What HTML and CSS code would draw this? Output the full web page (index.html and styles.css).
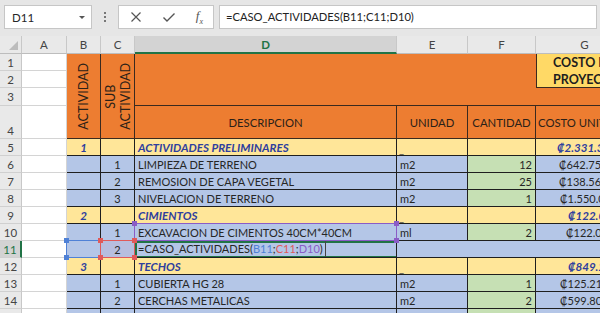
FILE: index.html
```html
<!DOCTYPE html>
<html lang="es">
<head>
<meta charset="utf-8">
<title>Hoja</title>
<link rel="stylesheet" href="styles.css">
</head>
<body>
<div class="toolbar">
  <div class="namebox"><span class="nb-text">D11</span><span class="caret"></span></div>
  <div class="grip"><i></i><i></i><i></i></div>
  <div class="fxbox">
    <svg class="ico" width="14" height="14" viewBox="0 0 14 14"><path d="M2.5 2.5 L11.5 11.5 M11.5 2.5 L2.5 11.5" stroke="#555" stroke-width="1.2" fill="none"/></svg>
    <svg class="ico" width="16" height="14" viewBox="0 0 16 14"><path d="M2.5 7.5 L6 11 L13.5 3.5" stroke="#555" stroke-width="1.4" fill="none"/></svg>
    <span class="fx">f<sub>x</sub></span>
  </div>
  <div class="formula">=CASO_ACTIVIDADES(B11;C11;D10)</div>
</div>

<div class="sheet">
  <!-- column headers -->
  <div class="ch corner"><span class="tri"></span></div>
  <div class="ch">A</div>
  <div class="ch">B</div>
  <div class="ch">C</div>
  <div class="ch ch-sel">D</div>
  <div class="ch">E</div>
  <div class="ch">F</div>
  <div class="ch">G</div>

  <!-- merged header blocks -->
  <div class="or m-b vcell"><span class="rot">ACTIVIDAD</span></div>
  <div class="or m-c vcell"><span class="rot">SUB<br>ACTIVIDAD</span></div>
  <div class="or m-df"></div>
  <div class="m-g title">COSTO DIRECTO DEL<br>PROYECTO</div>

  <div class="rh">1</div><div class="ca"></div>
  <div class="rh">2</div><div class="ca"></div>
  <div class="rh">3</div><div class="ca"></div><div class="or g3"></div>
  <div class="rh rh-b">4</div><div class="ca"></div>
  <div class="or hd">DESCRIPCION</div>
  <div class="or hd">UNIDAD</div>
  <div class="or hd">CANTIDAD</div>
  <div class="or hd hd-l">COSTO UNITARIO</div>

  <!-- row 5 -->
  <div class="rh">5</div><div class="ca"></div>
  <div class="yl c num bi">1</div>
  <div class="yl c"></div>
  <div class="yl c txt bi">ACTIVIDADES PRELIMINARES</div>
  <div class="yl c und">_</div>
  <div class="yl c"></div>
  <div class="yl c money bi p-a">₡2.331.310,00</div>

  <!-- row 6 -->
  <div class="rh">6</div><div class="ca"></div>
  <div class="bl c"></div>
  <div class="bl c num">1</div>
  <div class="bl c txt">LIMPIEZA DE TERRENO</div>
  <div class="bl c txt">m2</div>
  <div class="gr c qty">12</div>
  <div class="bl c money p-b">₡642.750,00</div>

  <!-- row 7 -->
  <div class="rh">7</div><div class="ca"></div>
  <div class="bl c"></div>
  <div class="bl c num">2</div>
  <div class="bl c txt">REMOSION DE CAPA VEGETAL</div>
  <div class="bl c txt">m2</div>
  <div class="gr c qty">25</div>
  <div class="bl c money p-b">₡138.560,00</div>

  <!-- row 8 -->
  <div class="rh">8</div><div class="ca"></div>
  <div class="bl c"></div>
  <div class="bl c num">3</div>
  <div class="bl c txt">NIVELACION DE TERRENO</div>
  <div class="bl c txt">m2</div>
  <div class="gr c qty">1</div>
  <div class="bl c money p-c">₡1.550.000,00</div>

  <!-- row 9 -->
  <div class="rh">9</div><div class="ca"></div>
  <div class="yl c num bi">2</div>
  <div class="yl c"></div>
  <div class="yl c txt bi">CIMIENTOS</div>
  <div class="yl c und">_</div>
  <div class="yl c"></div>
  <div class="yl c money bi p-d">₡122.000,00</div>

  <!-- row 10 -->
  <div class="rh">10</div><div class="ca"></div>
  <div class="bl c"></div>
  <div class="bl c num">1</div>
  <div class="bl c txt sel-wrap">EXCAVACION DE CIMENTOS 40CM*40CM<span class="ref ref-p"><i class="h tl"></i><i class="h tr"></i><i class="h bl2"></i><i class="h br"></i></span></div>
  <div class="bl c txt">ml</div>
  <div class="gr c qty">2</div>
  <div class="bl c money p-e">₡122.000,00</div>

  <!-- row 11 -->
  <div class="rh rh-sel">11</div><div class="ca"></div>
  <div class="bl c sel-wrap"><span class="ref ref-b"><i class="h tl"></i><i class="h tr"></i><i class="h bl2"></i><i class="h br"></i></span></div>
  <div class="bl c num c11 sel-wrap">2<span class="ref ref-r"><i class="h tl"></i><i class="h tr"></i><i class="h bl2"></i><i class="h br"></i></span></div>
  <div class="bl c txt active"><span class="edit">=CASO_ACTIVIDADES(<span class="k-b">B11</span>;<span class="k-r">C11</span>;<span class="k-p">D10</span>)</span></div>
  <div class="bl c span3"></div>

  <!-- row 12 -->
  <div class="rh">12</div><div class="ca"></div>
  <div class="yl c num bi">3</div>
  <div class="yl c"></div>
  <div class="yl c txt bi">TECHOS</div>
  <div class="yl c und">_</div>
  <div class="yl c"></div>
  <div class="yl c money bi p-d">₡849.210,00</div>

  <!-- row 13 -->
  <div class="rh">13</div><div class="ca"></div>
  <div class="bl c"></div>
  <div class="bl c num">1</div>
  <div class="bl c txt">CUBIERTA HG 28</div>
  <div class="bl c txt">m2</div>
  <div class="gr c qty">1</div>
  <div class="bl c money p-c">₡125.210,00</div>

  <!-- row 14 -->
  <div class="rh">14</div><div class="ca"></div>
  <div class="bl c"></div>
  <div class="bl c num">2</div>
  <div class="bl c txt">CERCHAS METALICAS</div>
  <div class="bl c txt">m2</div>
  <div class="gr c qty">2</div>
  <div class="bl c money p-c">₡599.800,00</div>

  <!-- row 15 -->
  <div class="rh">15</div><div class="ca"></div>
  <div class="bl c"></div>
  <div class="bl c num">3</div>
  <div class="bl c txt"></div>
  <div class="bl c txt"></div>
  <div class="gr c qty"></div>
  <div class="bl c money"></div>
</div>
</body>
</html>
```

FILE: styles.css
```css
* { box-sizing: border-box; }
html, body { margin: 0; padding: 0; }
body {
  width: 600px;
  height: 313px;
  overflow: hidden;
  background: #e6e6e6;
  font-family: Lato, "Liberation Sans", sans-serif;
  color: #262626;
}

/* ---------- formula bar ---------- */
.toolbar {
  height: 36px;
  display: flex;
  align-items: flex-start;
  padding: 5px 0 0 4px;
}
.namebox {
  width: 88px;
  height: 24px;
  background: #fff;
  border: 1px solid #c6c6c6;
  display: flex;
  align-items: center;
  justify-content: space-between;
  padding: 0 6px 0 7px;
  font-size: 11.5px;
}
.caret {
  width: 0; height: 0;
  border-left: 3px solid transparent;
  border-right: 3px solid transparent;
  border-top: 3px solid #555;
}
.grip {
  width: 26px;
  height: 24px;
  display: flex;
  flex-direction: column;
  align-items: center;
  justify-content: center;
  gap: 2px;
}
.grip i { width: 2px; height: 2px; background: #777; display: block; }
.fxbox {
  width: 96px;
  height: 24px;
  background: #fff;
  border: 1px solid #c6c6c6;
  display: flex;
  align-items: center;
  justify-content: space-between;
  padding: 0 10px 0 10px;
}
.fxbox .ico { display: block; }
.fx {
  font-family: "Liberation Serif", serif;
  font-style: italic;
  font-size: 13px;
  color: #555;
}
.fx sub { font-size: 8px; }
.formula {
  margin-left: 5px;
  width: 378px;
  height: 24px;
  background: #fff;
  border: 1px solid #c6c6c6;
  padding-left: 6px;
  font-size: 11.2px;
  line-height: 22px;
  color: #222;
}

/* ---------- sheet grid ---------- */
.sheet {
  display: grid;
  grid-template-columns: 22px 45px 34px 34px 262px 71px 68px 98px;
  grid-template-rows: 18px 17px 17px 18px 33px repeat(11, 17px);
  font-size: 11px;
}
.sheet > div {
  border-right: 1px solid #d4d4d4;
  border-bottom: 1px solid #d4d4d4;
  white-space: nowrap;
  overflow: hidden;
}
.ch {
  background: #e9e9e9;
  border-right: 1px solid #c8c8c8 !important;
  border-bottom: 1px solid #bdbdbd !important;
  display: flex;
  align-items: center;
  justify-content: center;
  color: #444;
  font-size: 11.5px;
}
.corner { position: relative; }
.tri {
  position: absolute;
  right: 3px; bottom: 3px;
  width: 0; height: 0;
  border-left: 9px solid transparent;
  border-bottom: 9px solid #bcbcbc;
}
.ch-sel {
  background: #d3d3d3;
  color: #217346;
  font-weight: bold;
  border-bottom: 2px solid #217346 !important;
}
.rh {
  background: #e9e9e9;
  border-right: 1px solid #c8c8c8 !important;
  border-bottom: 1px solid #d0d0d0 !important;
  display: flex;
  align-items: center;
  justify-content: center;
  color: #444;
  font-size: 11.5px;
}
.rh-b { align-items: flex-end; padding-bottom: 1px; }
.rh-sel {
  background: #d3d3d3;
  color: #217346;
  border-right: 2px solid #217346 !important;
}
.ca { background: #fff; }

/* header block */
.or { background: #ed7d31; color: #2b2118; }
.sheet > .or { border-right: 1px solid #3a2a1f; border-bottom: 1px solid #3a2a1f; }
.m-b { grid-column: 3; grid-row: 2 / 6; }
.m-c { grid-column: 4; grid-row: 2 / 6; }
.m-df { grid-column: 5 / 8; grid-row: 2 / 5; border-right: none !important; }
.sheet > .m-g {
  grid-column: 8;
  grid-row: 2 / 4;
  background: #ffd966;
  border-left: 1px solid #3a2a1f;
  border-bottom: 1px solid #3a2a1f;
  border-right: none;
  font-weight: bold;
  font-size: 12.5px;
  line-height: 17px;
  padding: 0 0 0 16px;
  color: #1e1e1e;
}
.sheet > .g3 { border-right: none; }
.vcell { display: flex; align-items: center; justify-content: center; }
.rot {
  writing-mode: vertical-rl;
  transform: rotate(180deg);
  text-align: center;
  font-size: 12.5px;
  line-height: 15px;
}
.hd {
  display: flex;
  align-items: center;
  justify-content: center;
  font-size: 11.3px;
}
.hd-l { justify-content: flex-start; padding-left: 2px; }

/* data cells */
.sheet > .c { border-right: 1px solid #1f1f1f; border-bottom: 1px solid #1f1f1f; }
.yl { background: #ffe699; }
.bl { background: #b4c6e7; }
.gr { background: #c6e0b4; }
.c { display: flex; align-items: center; font-size: 11px; }
.num { justify-content: center; }
.txt { padding-left: 3px; }
.qty { justify-content: flex-end; padding-right: 3px; }
.money { padding-left: 21px; }
.p-a { padding-left: 21px; }
.p-b { padding-left: 23px; }
.p-c { padding-left: 24px; }
.p-d { padding-left: 32px; }
.p-e { padding-left: 30px; }
.bi { font-weight: bold; font-style: italic; color: #2f3f9e; font-size: 11.6px; }
.und { align-items: flex-end; padding-left: 2px; color: #444; line-height: 12px; }
.sheet > .span3 { grid-column: span 3; border-right: none; }
.c11 { background: #b7bedf; }

/* reference / selection overlays */
.sheet > .sel-wrap { position: relative; overflow: visible; }
.ref {
  position: absolute;
  left: -1px; top: -1px; right: -1px; bottom: -1px;
  border: 1px solid;
  pointer-events: none;
}
.ref-p { border-color: #8a5cc6; }
.ref-b { border-color: #4f81d6; }
.ref-r { border-color: #e05a5a; }
.h {
  position: absolute;
  width: 5px; height: 5px;
}
.ref-p .h { background: #8a5cc6; }
.ref-b .h { background: #4f81d6; }
.ref-r .h { background: #e05a5a; }
.tl { left: -3px; top: -3px; }
.tr { right: -3px; top: -3px; }
.bl2 { left: -3px; bottom: -3px; }
.br { right: -3px; bottom: -3px; }

.active {
  box-shadow: inset 0 2px 0 #217346, inset 0 -1px 0 #217346, inset 2px 0 0 #217346;
}
.edit {
  display: inline-block;
  height: 100%;
  line-height: 15px;
  padding-right: 2px;
  border-right: 1px solid #444;
}
.k-b { color: #4f81d6; }
.k-r { color: #e05a5a; }
.k-p { color: #8a5cc6; }
```
